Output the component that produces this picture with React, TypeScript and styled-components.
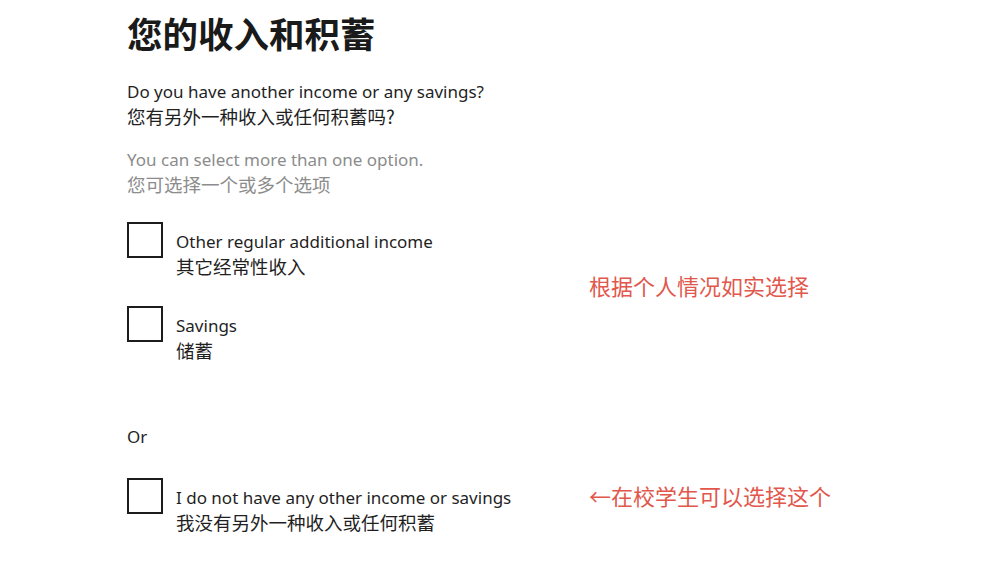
import React from 'react';
import styled, { createGlobalStyle } from 'styled-components';

const GlobalStyle = createGlobalStyle`
  html, body {
    margin: 0;
    padding: 0;
    background: #ffffff;
  }
  body {
    font-family: 'Noto Sans', 'Noto Sans CJK SC', sans-serif;
    color: #1f1f1f;
  }
`;

const Page = styled.div`
  width: 998px;
  min-height: 564px;
  box-sizing: border-box;
  padding: 12px 0 0 127px;
`;

const Title = styled.h1`
  margin: 0;
  font-family: 'Noto Sans CJK SC', sans-serif;
  font-size: 35.5px;
  line-height: 42px;
  font-weight: 700;
  color: #1a1a1a;
`;

const Block = styled.div<{ $top: number; $muted?: boolean }>`
  margin-top: ${(p) => p.$top}px;
  color: ${(p) => (p.$muted ? '#8c8c8c' : '#1f1f1f')};
`;

const En = styled.div`
  font-family: 'Noto Sans', sans-serif;
  font-size: 17px;
  line-height: 24px;
`;

const Zh = styled.div`
  font-family: 'Noto Sans CJK SC', sans-serif;
  font-size: 18.5px;
  line-height: 24px;
`;

const Group = styled.div<{ $top: number }>`
  display: flex;
  margin-top: ${(p) => p.$top}px;
`;

const Options = styled.div`
  width: 462px;
  display: flex;
  flex-direction: column;
  gap: 28px;
`;

const Row = styled.label`
  display: flex;
  align-items: flex-start;
  gap: 13px;
`;

const Box = styled.span`
  flex: none;
  width: 36px;
  height: 36px;
  box-sizing: border-box;
  border: 2px solid #1c1c1c;
  background: #fff;
`;

const Label = styled.div`
  padding-top: 8px;
`;

const Note = styled.div<{ $top: number }>`
  padding-top: ${(p) => p.$top}px;
  font-family: 'Noto Sans CJK SC', sans-serif;
  font-size: 22px;
  line-height: 30px;
  color: #e2574c;
`;

const Or = styled(En)`
  margin-top: 63px;
`;

const Option = ({ en, zh }: { en: string; zh: string }) => (
  <Row>
    <Box />
    <Label>
      <En>{en}</En>
      <Zh>{zh}</Zh>
    </Label>
  </Row>
);

export default function App() {
  return (
    <>
      <GlobalStyle />
      <Page>
        <Title>您的收入和积蓄</Title>
        <Block $top={26}>
          <En>Do you have another income or any savings?</En>
          <Zh>您有另外一种收入或任何积蓄吗?</Zh>
        </Block>
        <Block $top={20} $muted>
          <En>You can select more than one option.</En>
          <Zh>您可选择一个或多个选项</Zh>
        </Block>
        <Group $top={26}>
          <Options>
            <Option en="Other regular additional income" zh="其它经常性收入" />
            <Option en="Savings" zh="储蓄" />
          </Options>
          <Note $top={48}>根据个人情况如实选择</Note>
        </Group>
        <Or>Or</Or>
        <Group $top={29}>
          <Options>
            <Option en="I do not have any other income or savings" zh="我没有另外一种收入或任何积蓄" />
          </Options>
          <Note $top={2}>←在校学生可以选择这个</Note>
        </Group>
      </Page>
    </>
  );
}
